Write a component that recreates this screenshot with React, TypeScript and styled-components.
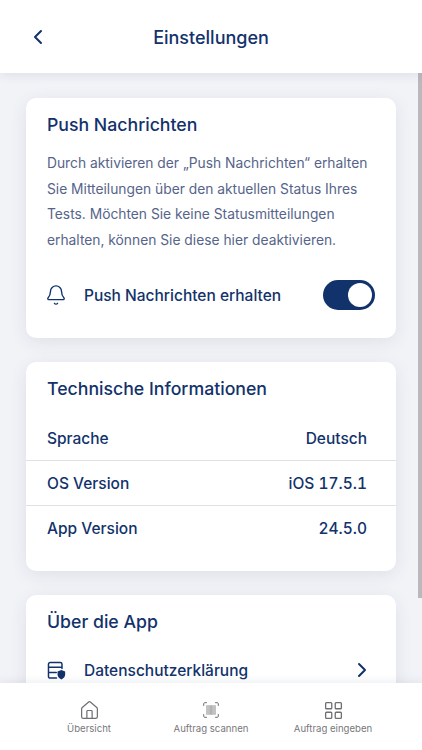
import styled, { createGlobalStyle } from "styled-components";
import { ChevronLeft, ChevronRight, Bell, House, LayoutGrid } from "lucide-react";

const navy = "#12326b";

const GlobalStyle = createGlobalStyle`
  html, body {
    margin: 0;
    padding: 0;
    height: 100%;
    overflow: hidden;
  }
  body {
    font-family: Inter, "Liberation Sans", sans-serif;
    background: #f2f3f7;
  }
`;

const Screen = styled.div`
  width: 422px;
  height: 750px;
  display: flex;
  flex-direction: column;
  overflow: hidden;
  position: relative;
`;

const Header = styled.header`
  height: 73px;
  flex: none;
  box-sizing: border-box;
  padding-top: 2px;
  background: #fff;
  display: flex;
  align-items: center;
  justify-content: center;
  position: relative;
  z-index: 2;
  box-shadow: 0 2px 10px rgba(30, 45, 90, 0.1);
`;

const BackButton = styled.div`
  position: absolute;
  left: 26px;
  top: 25px;
  color: ${navy};
  display: flex;
`;

const Title = styled.h1`
  margin: 0;
  font-size: 18px;
  font-weight: 500;
  color: ${navy};
`;

const Content = styled.main`
  flex: 1;
  min-height: 0;
  overflow: hidden;
  padding: 25px 26px 0;
  display: flex;
  flex-direction: column;
  gap: 24px;
  position: relative;
`;

const ScrollThumb = styled.div`
  position: absolute;
  right: 0;
  top: 0;
  width: 4px;
  height: 525px;
  background: #b9b9bd;
`;

const Card = styled.section`
  flex: none;
  background: #fff;
  border-radius: 10px;
  box-shadow: 0 4px 18px rgba(30, 45, 90, 0.09);
  box-sizing: border-box;
  padding-top: 15px;
`;

const PushCard = styled(Card)`
  height: 240px;
  padding-left: 21px;
  padding-right: 21px;
`;

const InfoCard = styled(Card)`
  height: 209px;
`;

const AboutCard = styled(Card)`
  height: 200px;
`;

const CardTitle = styled.h2<{ $inset?: boolean }>`
  margin: 0;
  font-size: 17.7px;
  line-height: 23px;
  font-weight: 500;
  color: ${navy};
  padding-left: ${(p) => (p.$inset ? "21px" : "0")};
`;

const Description = styled.p`
  margin: 15px 0 0;
  font-size: 13.8px;
  line-height: 25.5px;
  color: #56648a;
  white-space: nowrap;
`;

const PushRow = styled.div`
  margin-top: 27px;
  display: flex;
  align-items: center;
  height: 30px;
  color: ${navy};
`;

const RowLabel = styled.span`
  font-size: 15.5px;
  font-weight: 500;
  color: ${navy};
  margin-left: 19px;
  flex: 1;
`;

const IconSlot = styled.div`
  width: 18px;
  flex: none;
  display: flex;
  justify-content: center;
  color: ${navy};
  svg {
    flex: none;
  }
`;

const Toggle = styled.div`
  width: 52px;
  height: 30px;
  border-radius: 15px;
  background: ${navy};
  display: flex;
  align-items: center;
  justify-content: flex-end;
  padding-right: 3px;
  box-sizing: border-box;
`;

const Knob = styled.div`
  width: 24px;
  height: 24px;
  border-radius: 50%;
  background: #fff;
`;

const InfoList = styled.div`
  margin-top: 16px;
`;

const InfoRow = styled.div`
  height: 45px;
  display: flex;
  align-items: center;
  justify-content: space-between;
  padding: 0 29px 0 21px;
  font-size: 15.5px;
  font-weight: 500;
  font-variant-numeric: tabular-nums;
  color: ${navy};
  border-bottom: 1px solid #dfe1e7;
  box-sizing: border-box;
  &:last-child {
    border-bottom: none;
  }
`;

const LinkRow = styled.div`
  margin-top: 22px;
  height: 30px;
  display: flex;
  align-items: center;
  padding: 0 22px 0 21px;
  color: ${navy};
`;

const BottomNav = styled.nav`
  position: absolute;
  left: 0;
  right: 0;
  bottom: 0;
  height: 67px;
  box-sizing: border-box;
  padding: 0 28px;
  background: #fff;
  z-index: 3;
  display: grid;
  grid-template-columns: repeat(3, 122px);
  box-shadow: 0 -2px 8px rgba(30, 45, 90, 0.08);
`;

const NavItem = styled.div`
  display: flex;
  flex-direction: column;
  align-items: center;
  padding-top: 16px;
  color: #6f6f73;
`;

const NavIcon = styled.div`
  height: 22px;
  display: flex;
  align-items: center;
  justify-content: center;
`;

const NavLabel = styled.span`
  margin-top: 1px;
  font-size: 9.6px;
  line-height: 14px;
  color: #77777b;
  white-space: nowrap;
`;

const DataShieldIcon = () => (
  <svg width="19" height="19" viewBox="0 0 18 18" fill="none">
    <path
      d="M9 16.2H3a1.6 1.6 0 0 1-1.6-1.6V3A1.6 1.6 0 0 1 3 1.4h9.6A1.6 1.6 0 0 1 14.2 3v4.2M1.4 6h12.8M1.4 10.8h7.4"
      stroke={navy}
      strokeWidth="1.4"
      strokeLinecap="round"
    />
    <path
      d="M13.6 8.6l3.6 1.3v3c0 2.2-1.6 3.7-3.6 4.6-2-.9-3.6-2.4-3.6-4.6v-3z"
      fill={navy}
    />
  </svg>
);

const ScanIcon = () => (
  <svg width="16" height="16" viewBox="0 0 16 16" fill="none" stroke="#6f6f73">
    <path
      d="M.7 3.500V1.700a1 1 0 0 1 1-1h1.800M12.500.7h1.800a1 1 0 0 1 1 1v1.800M15.300 12.500v1.800a1 1 0 0 1-1 1h-1.800M3.500 15.300H1.700a1 1 0 0 1-1-1v-1.800"
      strokeWidth="1"
      strokeLinecap="round"
    />
    <path
      d="M3.800 3.200v9.600M5 3.200v9.600M6.200 3.200v9.600M7.400 3.200v9.600M8.600 3.200v9.600M9.800 3.200v9.600M11 3.200v9.600M12.200 3.200v9.600"
      strokeWidth="0.8"
      opacity="0.75"
    />
  </svg>
);

export default function App() {
  return (
    <Screen>
      <GlobalStyle />
      <Header>
        <BackButton>
          <ChevronLeft size={24} strokeWidth={2} />
        </BackButton>
        <Title>Einstellungen</Title>
      </Header>
      <Content>
        <ScrollThumb />
        <PushCard>
          <CardTitle>Push Nachrichten</CardTitle>
          <Description>
            Durch aktivieren der „Push Nachrichten“ erhalten
            <br />
            Sie Mitteilungen über den aktuellen Status Ihres
            <br />
            Tests. Möchten Sie keine Statusmitteilungen
            <br />
            erhalten, können Sie diese hier deaktivieren.
          </Description>
          <PushRow>
            <IconSlot>
              <Bell size={22} strokeWidth={1.5} />
            </IconSlot>
            <RowLabel>Push Nachrichten erhalten</RowLabel>
            <Toggle>
              <Knob />
            </Toggle>
          </PushRow>
        </PushCard>
        <InfoCard>
          <CardTitle $inset>Technische Informationen</CardTitle>
          <InfoList>
            <InfoRow>
              <span>Sprache</span>
              <span>Deutsch</span>
            </InfoRow>
            <InfoRow>
              <span>OS Version</span>
              <span>iOS 17.5.1</span>
            </InfoRow>
            <InfoRow>
              <span>App Version</span>
              <span>24.5.0</span>
            </InfoRow>
          </InfoList>
        </InfoCard>
        <AboutCard>
          <CardTitle $inset>Über die App</CardTitle>
          <LinkRow>
            <IconSlot>
              <DataShieldIcon />
            </IconSlot>
            <RowLabel>Datenschutzerklärung</RowLabel>
            <ChevronRight size={24} strokeWidth={2} />
          </LinkRow>
        </AboutCard>
      </Content>
      <BottomNav>
        <NavItem>
          <NavIcon>
            <House size={21} strokeWidth={1.4} />
          </NavIcon>
          <NavLabel>Übersicht</NavLabel>
        </NavItem>
        <NavItem>
          <NavIcon>
            <ScanIcon />
          </NavIcon>
          <NavLabel>Auftrag scannen</NavLabel>
        </NavItem>
        <NavItem>
          <NavIcon>
            <LayoutGrid size={21} strokeWidth={1.5} />
          </NavIcon>
          <NavLabel>Auftrag eingeben</NavLabel>
        </NavItem>
      </BottomNav>
    </Screen>
  );
}
